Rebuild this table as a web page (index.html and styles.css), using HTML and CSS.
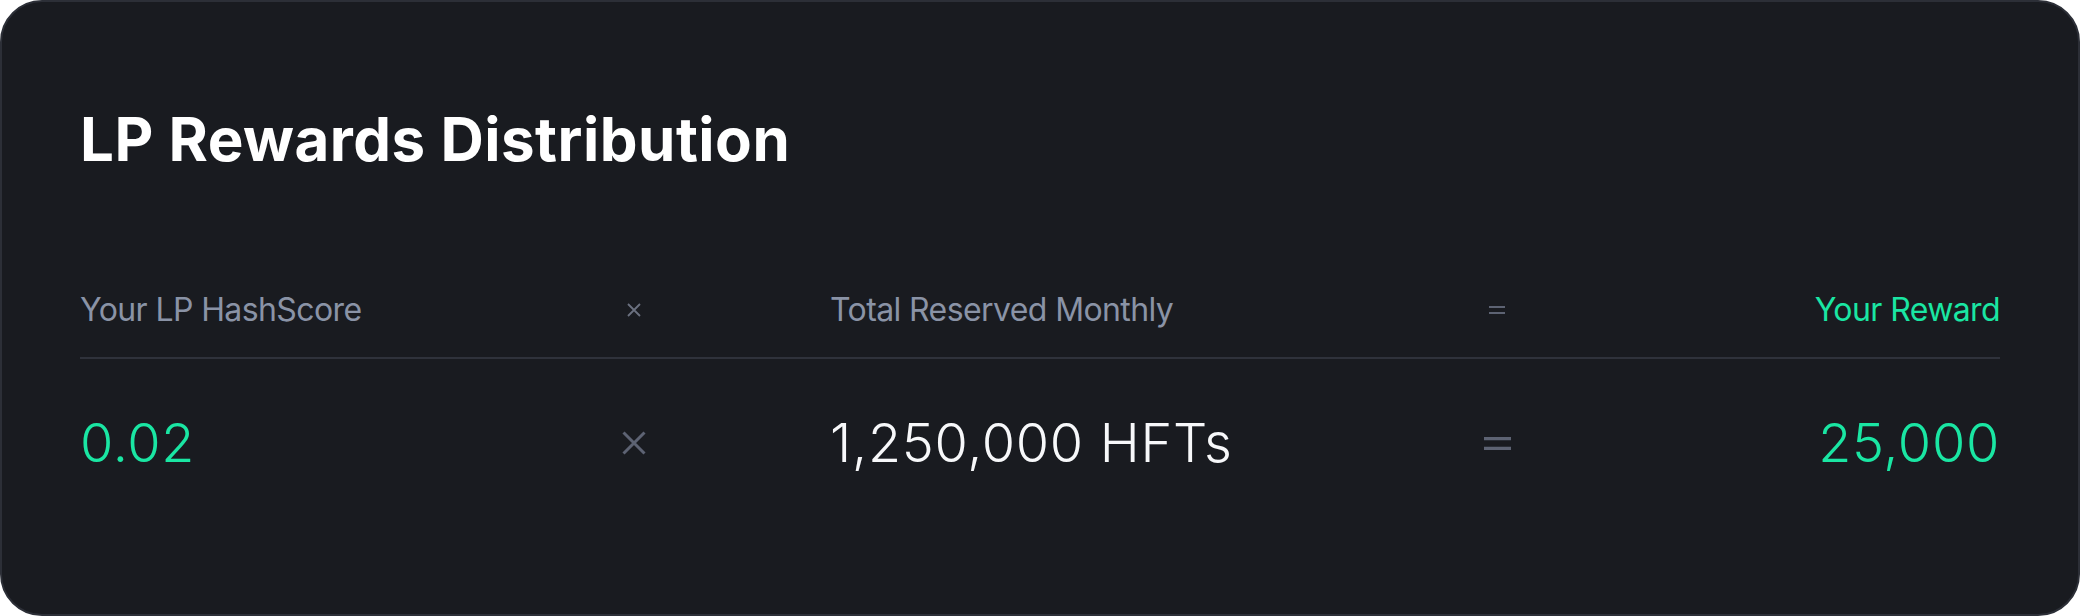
FILE: index.html
```html
<!DOCTYPE html>
<html lang="en">
<head>
<meta charset="utf-8">
<title>LP Rewards Distribution</title>
<link rel="stylesheet" href="styles.css">
</head>
<body>
<section class="card">
  <h1 class="title">LP Rewards Distribution</h1>
  <div class="formula">
    <div class="head">Your LP HashScore</div>
    <div class="head op">
      <svg viewBox="0 0 14 14" width="14" height="14"><path d="M1 1L13 13M13 1L1 13" stroke="#6b7180" stroke-width="1.8" fill="none"/></svg>
    </div>
    <div class="head mid">Total Reserved Monthly</div>
    <div class="head op">
      <svg viewBox="0 0 16 8" width="16" height="8"><path d="M0 1H16M0 7H16" stroke="#5d6373" stroke-width="2" fill="none"/></svg>
    </div>
    <div class="head accent right">Your Reward</div>

    <div class="divider"></div>

    <div class="val accent">0.02</div>
    <div class="val op">
      <svg viewBox="0 0 24 24" width="24" height="24"><path d="M1.5 1.5L22.5 22.5M22.5 1.5L1.5 22.5" stroke="#5d6373" stroke-width="3" fill="none"/></svg>
    </div>
    <div class="val white mid">1,250,000 HFTs</div>
    <div class="val op">
      <svg viewBox="0 0 27 13" width="27" height="13"><path d="M0 1.5H27M0 11.5H27" stroke="#5d6373" stroke-width="3.5" fill="none"/></svg>
    </div>
    <div class="val accent right">25,000</div>
  </div>
</section>
</body>
</html>
```

FILE: styles.css
```css
html, body {
  margin: 0;
  padding: 0;
  background: #ffffff;
}

body {
  font-family: Inter, "Noto Sans", sans-serif;
}

.card {
  box-sizing: border-box;
  width: 2080px;
  height: 616px;
  background: #191b20;
  border: 2px solid #2c2f37;
  border-radius: 42px;
  padding: 107px 78px 0 78px;
}

.title {
  margin: 0;
  font-size: 60px;
  line-height: 60px;
  font-weight: 700;
  color: #ffffff;
  letter-spacing: 0.5px;
}

.formula {
  margin-top: 121px;
  display: grid;
  grid-template-columns: 356px 48px 467px 48px 1fr;
  column-gap: 174px;
}

.head,
.val {
  display: flex;
  align-items: center;
  white-space: nowrap;
}

.mid {
  margin-left: -2px;
}

.head {
  height: 40px;
  font-size: 32px;
  line-height: 40px;
  font-weight: 400;
  color: #8a93a6;
  letter-spacing: -0.6px;
}

.divider {
  grid-column: 1 / -1;
  height: 2px;
  background: #2f323b;
  margin: 27px 0 52px 0;
}

.val {
  height: 64px;
  font-size: 54px;
  line-height: 64px;
  font-weight: 300;
  color: #f5f6f8;
  letter-spacing: 0.7px;
}

.op {
  justify-content: center;
}

.accent {
  color: #1ae6a3;
}

.white {
  color: #f7f8fa;
}

.right {
  justify-content: flex-end;
}
```
